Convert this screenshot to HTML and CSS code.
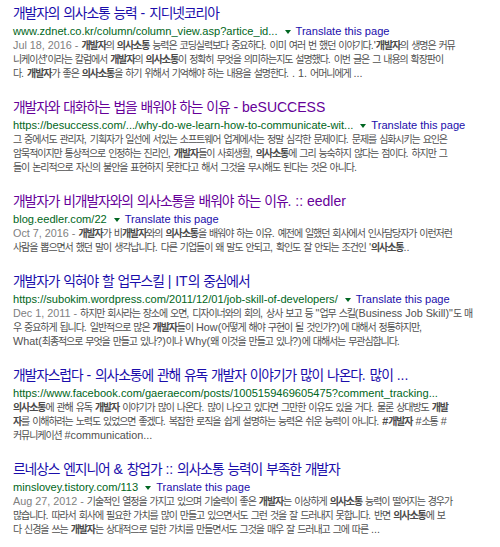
FILE: index.html
```html
<!DOCTYPE html>
<html lang="ko">
<head>
<meta charset="utf-8">
<title>개발자 의사소통</title>
<link rel="stylesheet" href="styles.css">
</head>
<body>
<div class="results">

  <div class="r">
    <a class="title">개발자의 의사소통 능력 - 지디넷코리아</a>
    <div class="url"><cite>www.zdnet.co.kr/column/column_view.asp?artice_id...</cite><span class="arrow"></span><a class="tr">Translate this page</a></div>
    <div class="st">
      <span class="ln"><span class="f">Jul 18, 2016 - </span><b>개발자</b>의 <b>의사소통</b> 능력은 코딩실력보다 중요하다. 이미 여러 번 했던 이야기다.'<b>개발자</b>의 생명은 커뮤</span>
      <span class="ln">니케이션'이라는 칼럼에서 <b>개발자</b>의 <b>의사소통</b>이 정확히 무엇을 의미하는지도 설명했다. 이번 글은 그 내용의 확장판이</span>
      <span class="ln">다. <b>개발자</b>가 좋은 <b>의사소통</b>을 하기 위해서 기억해야 하는 내용을 설명한다. . 1. 어머니에게 ...</span>
    </div>
  </div>

  <div class="r">
    <a class="title visited">개발자와 대화하는 법을 배워야 하는 이유 - beSUCCESS</a>
    <div class="url"><cite>https://besuccess.com/.../why-do-we-learn-how-to-communicate-wit...</cite><span class="arrow"></span><a class="tr">Translate this page</a></div>
    <div class="st">
      <span class="ln">그 중에서도 관리자, 기획자가 일선에 서있는 소프트웨어 업계에서는 정말 심각한 문제이다. 문제를 심화시키는 요인은</span>
      <span class="ln">암묵적이지만 통상적으로 인정하는 진리인, <b>개발자</b>들이 사회생활, <b>의사소통</b>에 그리 능숙하지 않다는 점이다. 하지만 그</span>
      <span class="ln">들이 논리적으로 자신의 불안을 표현하지 못한다고 해서 그것을 무시해도 된다는 것은 아니다.</span>
    </div>
  </div>

  <div class="r">
    <a class="title visited">개발자가 비개발자와의 의사소통을 배워야 하는 이유. :: eedler</a>
    <div class="url"><cite>blog.eedler.com/22</cite><span class="arrow"></span><a class="tr">Translate this page</a></div>
    <div class="st">
      <span class="ln"><span class="f">Oct 7, 2016 - </span><b>개발자</b>가 비<b>개발자</b>와의 <b>의사소통</b>을 배워야 하는 이유. 예전에 일했던 회사에서 인사담당자가 이런저런</span>
      <span class="ln">사람을 뽑으면서 했던 말이 생각납니다. 다른 기업들이 왜 말도 안되고, 확인도 잘 안되는 조건인 '<b>의사소통</b>..</span>
    </div>
  </div>

  <div class="r">
    <a class="title">개발자가 익혀야 할 업무스킬 | IT의 중심에서</a>
    <div class="url"><cite>https://subokim.wordpress.com/2011/12/01/job-skill-of-developers/</cite><span class="arrow"></span><a class="tr">Translate this page</a></div>
    <div class="st">
      <span class="ln"><span class="f">Dec 1, 2011 - </span>하지만 회사라는 장소에 오면, 디자이너와의 회의, 상사 보고 등 "업무 스킬(Business Job Skill)"도 매</span>
      <span class="ln">우 중요하게 됩니다. 일반적으로 많은 <b>개발자</b>들이 How(어떻게 해야 구현이 될 것인가?)에 대해서 정통하지만,</span>
      <span class="ln">What(최종적으로 무엇을 만들고 있나?)이나 Why(왜 이것을 만들고 있나?)에 대해서는 무관심합니다.</span>
    </div>
  </div>

  <div class="r">
    <a class="title">개발자스럽다 - 의사소통에 관해 유독 개발자 이야기가 많이 나온다. 많이 ...</a>
    <div class="url"><cite>https://www.facebook.com/gaeraecom/posts/1005159469605475?comment_tracking...</cite></div>
    <div class="st">
      <span class="ln"><b>의사소통</b>에 관해 유독 <b>개발자</b> 이야기가 많이 나온다. 많이 나오고 있다면 그만한 이유도 있을 거다. 물론 상대방도 <b>개발</b></span>
      <span class="ln"><b>자</b>를 이해하려는 노력도 있었으면 좋겠다. 복잡한 로직을 쉽게 설명하는 능력은 쉬운 능력이 아니다. <b>#개발자</b> #소통 #</span>
      <span class="ln">커뮤니케이션 #communication...</span>
    </div>
  </div>

  <div class="r">
    <a class="title">르네상스 엔지니어 &amp; 창업가 :: 의사소통 능력이 부족한 개발자</a>
    <div class="url"><cite>minslovey.tistory.com/113</cite><span class="arrow"></span><a class="tr">Translate this page</a></div>
    <div class="st">
      <span class="ln"><span class="f">Aug 27, 2012 - </span>기술적인 열정을 가지고 있으며 기술력이 좋은 <b>개발자</b>는 이상하게 <b>의사소통</b> 능력이 떨어지는 경우가</span>
      <span class="ln">많습니다. 따라서 회사에 필요한 가치를 많이 만들고 있으면서도 그런 것을 잘 드러내지 못합니다. 반면 <b>의사소통</b>에 보</span>
      <span class="ln">다 신경을 쓰는 <b>개발자</b>는 상대적으로 덜한 가치를 만들면서도 그것을 매우 잘 드러내고 그에 따른 ...</span>
    </div>
  </div>

</div>
<script src="script.js"></script>
</body>
</html>
```

FILE: styles.css
```css
html, body {
  margin: 0;
  padding: 0;
  background: #ffffff;
}

body {
  font-family: "Liberation Sans", Arial, "Noto Sans CJK KR", sans-serif;
  overflow: hidden;
}

.results {
  padding: 3px 0 0 13px;
  display: flex;
  flex-direction: column;
  gap: 17px;
}

.r {
  display: flex;
  flex-direction: column;
}

.title {
  display: block;
  font-size: 14px;
  line-height: 21px;
  color: #1a0dab;
  white-space: nowrap;
  text-decoration: none;
}

.title.visited {
  color: #660099;
}

.title .ko {
  font-size: 13.8px;
  letter-spacing: -1.1px;
}

.url {
  font-size: 11.1px;
  line-height: 14px;
  white-space: nowrap;
  display: flex;
  align-items: center;
}

.url cite {
  font-style: normal;
  color: #006621;
}

.arrow {
  display: inline-block;
  width: 0;
  height: 0;
  border-top: 4px solid #006621;
  border-left: 3px solid transparent;
  border-right: 3px solid transparent;
  margin: 1px 5px 0 7px;
}

.tr {
  color: #1a0dab;
  text-decoration: none;
}

.st {
  font-size: 10.8px;
  line-height: 14px;
  color: #505050;
}

.ln {
  display: block;
  white-space: nowrap;
}

.st b {
  font-weight: bold;
  color: #4a4a4a;
}

.f {
  color: #808080;
}

.ko {
  font-family: "Noto Sans CJK KR", sans-serif;
  line-height: 1;
}

.st .ko {
  font-size: 10px;
  letter-spacing: -1.1px;
}
```

FILE: script.js
```js
(function () {
  var re = /[\u1100-\u11FF\u3130-\u318F\uAC00-\uD7AF]+/g;
  var walker = document.createTreeWalker(document.body, NodeFilter.SHOW_TEXT);
  var nodes = [];
  while (walker.nextNode()) nodes.push(walker.currentNode);
  nodes.forEach(function (n) {
    var t = n.nodeValue;
    re.lastIndex = 0;
    if (!re.test(t)) return;
    re.lastIndex = 0;
    var frag = document.createDocumentFragment();
    var last = 0, m;
    while ((m = re.exec(t))) {
      if (m.index > last) frag.appendChild(document.createTextNode(t.slice(last, m.index)));
      var s = document.createElement('span');
      s.className = 'ko';
      s.textContent = m[0];
      frag.appendChild(s);
      last = m.index + m[0].length;
    }
    if (last < t.length) frag.appendChild(document.createTextNode(t.slice(last)));
    n.parentNode.replaceChild(frag, n);
  });
})();
```
